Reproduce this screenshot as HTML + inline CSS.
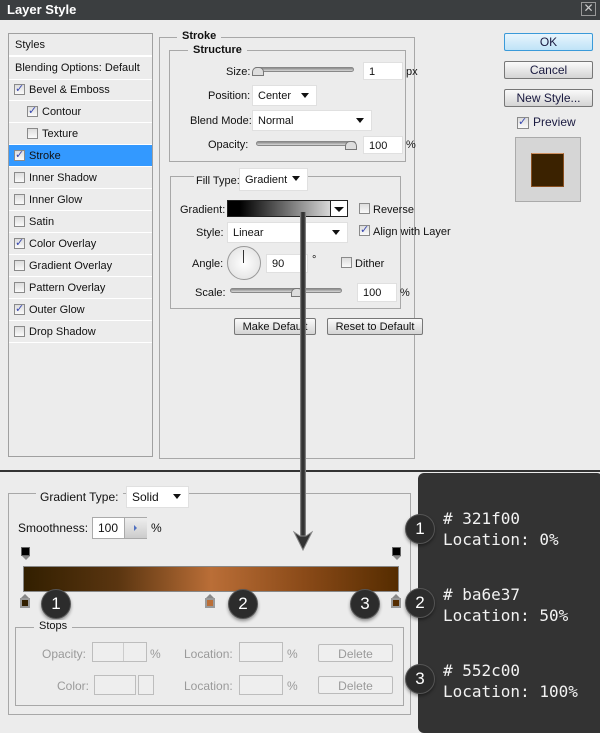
<!DOCTYPE html>
<html><head><meta charset="utf-8"><style>
*{margin:0;padding:0;box-sizing:border-box}
body{width:600px;height:731px;background:#ececec;font-family:"Liberation Sans","DejaVu Sans",sans-serif;font-size:11px;color:#111;position:relative;overflow:hidden}
.a{position:absolute}
.t{position:absolute;white-space:nowrap}
.title{left:0;top:0;width:600px;height:20px;background:#3b3e40;color:#fff;font-weight:bold;font-size:13px;padding:2px 0 0 7px}
.x{right:4px;top:2px;width:15px;height:14px;border:1px solid #999;color:#ccc;font-size:12px;line-height:11px;text-align:center}
.list{left:8px;top:33px;width:145px;height:424px;border:1px solid #a0a0a0;background:#ececec}
.row{position:absolute;left:0;width:143px;height:22px;border-bottom:1px solid #fff;padding:5px 0 0 20px}
.cb{position:absolute;width:11px;height:11px;border:1px solid #8a8a8a;background:linear-gradient(#ddd,#fafafa)}
.cb.on::after{content:"✓";position:absolute;left:0px;top:-3px;font-size:11px;color:#3a4ab0;font-weight:bold}
.sel{background:#3399ff}
.box{position:absolute;border:1px solid #a8a8a8}
.lg{position:absolute;background:#ececec;padding:0 5px;font-weight:bold}
.inp{position:absolute;background:#fff;border:1px solid #e0e0e0;height:18px;padding:3px 0 0 5px}
.dd::after{content:"";position:absolute;right:7px;top:7px;border:4px solid transparent;border-top:5px solid #111;border-bottom:0}
.sl{position:absolute;height:5px;border-radius:3px;background:linear-gradient(#8a8a8a,#d8d8d8);border:1px solid #888}
.th{position:absolute;width:12px;height:9px;background:#ddd;border:1px solid #777;border-radius:5px 5px 0 0}
.btn{position:absolute;height:17px;border:1px solid #777;border-radius:2px;background:linear-gradient(#fafafa,#d4d4d4);text-align:center;padding-top:2px;font-size:11px}
.big{font-size:12px;padding-top:1px;color:#1a1a40}
.dark{left:418px;top:473px;width:185px;height:260px;background:#333;border-radius:6px 6px 0 6px}
.mono{font-family:"DejaVu Sans Mono","Liberation Mono",monospace;font-size:16px;color:#f2f2f2;line-height:21px}
.circ{position:absolute;width:30px;height:30px;border-radius:50%;background:#2c2c2c;border:1px solid #555;color:#fff;font-size:17px;text-align:center;line-height:28px;box-shadow:0 2px 3px rgba(0,0,0,.4)}
.gray{color:#9a9a9a}
.ginp{position:absolute;border:1px solid #bdbdbd;background:#eee;height:20px}
.mk{position:absolute;width:10px;height:15px}
</style></head><body>
<div class="a title">Layer Style</div>
<div class="a x">✕</div>

<div class="a list">
 <div class="row" style="top:0;padding-left:6px;border-bottom:2px solid #fff;height:23px">Styles</div>
 <div class="row" style="top:23px;padding-left:6px;height:23px">Blending Options: Default</div>
 <div class="row" style="top:45px"><span class="cb on" style="left:5px;top:5px"></span>Bevel &amp; Emboss</div>
 <div class="row" style="top:67px;padding-left:33px"><span class="cb on" style="left:18px;top:5px"></span>Contour</div>
 <div class="row" style="top:89px;padding-left:33px"><span class="cb" style="left:18px;top:5px"></span>Texture</div>
 <div class="row sel" style="top:111px"><span class="cb on" style="left:5px;top:5px"></span>Stroke</div>
 <div class="row" style="top:133px"><span class="cb" style="left:5px;top:5px"></span>Inner Shadow</div>
 <div class="row" style="top:155px"><span class="cb" style="left:5px;top:5px"></span>Inner Glow</div>
 <div class="row" style="top:177px"><span class="cb" style="left:5px;top:5px"></span>Satin</div>
 <div class="row" style="top:199px"><span class="cb on" style="left:5px;top:5px"></span>Color Overlay</div>
 <div class="row" style="top:221px"><span class="cb" style="left:5px;top:5px"></span>Gradient Overlay</div>
 <div class="row" style="top:243px"><span class="cb" style="left:5px;top:5px"></span>Pattern Overlay</div>
 <div class="row" style="top:265px"><span class="cb on" style="left:5px;top:5px"></span>Outer Glow</div>
 <div class="row" style="top:287px"><span class="cb" style="left:5px;top:5px"></span>Drop Shadow</div>
</div>

<div class="box" style="left:159px;top:37px;width:256px;height:422px"></div>
<div class="lg" style="left:177px;top:30px">Stroke</div>
<div class="box" style="left:169px;top:50px;width:237px;height:112px"></div>
<div class="lg" style="left:188px;top:44px">Structure</div>
<div class="t" style="left:226px;top:66px">Size:</div>
<div class="sl" style="left:254px;top:67px;width:100px"></div><div class="th" style="left:252px;top:67px"></div>
<div class="inp" style="left:363px;top:62px;width:40px">1</div><div class="t" style="left:406px;top:66px">px</div>
<div class="t" style="left:208px;top:90px">Position:</div>
<div class="inp dd" style="left:252px;top:85px;width:65px;height:21px;padding-top:4px">Center</div>
<div class="t" style="left:190px;top:115px">Blend Mode:</div>
<div class="inp dd" style="left:252px;top:110px;width:120px;height:21px;padding-top:4px">Normal</div>
<div class="t" style="left:208px;top:139px">Opacity:</div>
<div class="sl" style="left:256px;top:141px;width:100px"></div><div class="th" style="left:345px;top:141px"></div>
<div class="inp" style="left:363px;top:136px;width:40px">100</div><div class="t" style="left:406px;top:139px">%</div>

<div class="box" style="left:170px;top:176px;width:231px;height:133px"></div>
<div class="t" style="left:194px;top:175px;background:#ececec;padding:0 2px">Fill Type:</div>
<div class="inp dd" style="left:239px;top:168px;width:69px;height:23px;padding-top:5px">Gradient</div>
<div class="t" style="left:180px;top:204px">Gradient:</div>
<div class="a" style="left:227px;top:200px;width:121px;height:17px;border:1px solid #222;background:linear-gradient(90deg,#000,#000 10%,#fff)"></div>
<div class="a" style="left:330px;top:200px;width:18px;height:17px;border:1px solid #222;background:#fff"></div>
<div class="a" style="left:334px;top:207px;border:5px solid transparent;border-top:5px solid #111;border-bottom:0"></div>
<div class="cb" style="left:359px;top:203px"></div><div class="t" style="left:373px;top:204px">Reverse</div>
<div class="t" style="left:196px;top:227px">Style:</div>
<div class="inp dd" style="left:227px;top:222px;width:121px;height:21px;padding-top:4px">Linear</div>
<div class="cb on" style="left:359px;top:225px"></div><div class="t" style="left:373px;top:226px">Align with Layer</div>
<div class="t" style="left:192px;top:258px">Angle:</div>
<div class="a" style="left:227px;top:246px;width:34px;height:34px;border-radius:50%;border:1px solid #999;background:radial-gradient(#fff,#ddd)"></div>
<div class="a" style="left:243px;top:250px;width:1px;height:13px;background:#333"></div>
<div class="inp" style="left:266px;top:254px;width:42px;height:19px">90</div><div class="t" style="left:312px;top:254px">°</div>
<div class="cb" style="left:341px;top:257px"></div><div class="t" style="left:355px;top:258px">Dither</div>
<div class="t" style="left:195px;top:287px">Scale:</div>
<div class="sl" style="left:230px;top:288px;width:112px"></div><div class="th" style="left:291px;top:288px"></div>
<div class="inp" style="left:357px;top:283px;width:40px;height:19px">100</div><div class="t" style="left:400px;top:287px">%</div>

<div class="btn" style="left:234px;top:318px;width:82px">Make Default</div>
<div class="btn" style="left:327px;top:318px;width:96px">Reset to Default</div>

<div class="btn big" style="left:504px;top:33px;width:89px;height:18px;border-color:#3a9ad9;background:linear-gradient(#e8f5fd,#bfe3f7)">OK</div>
<div class="btn big" style="left:504px;top:61px;width:89px;height:18px">Cancel</div>
<div class="btn big" style="left:504px;top:89px;width:89px;height:18px">New Style...</div>
<div class="cb on" style="left:517px;top:117px;width:12px;height:12px"></div><div class="t" style="left:533px;top:115px;font-size:12px;color:#1a1a40">Preview</div>
<div class="a" style="left:515px;top:137px;width:66px;height:65px;background:#d6d6d6;border:1px solid #aaa"></div>
<div class="a" style="left:531px;top:153px;width:33px;height:34px;background:#3b2200;border:1px solid #8a5020;border-top-color:#d09060"></div>

<div class="a" style="left:0;top:470px;width:600px;height:2px;background:#333"></div>

<div class="box" style="left:8px;top:493px;width:403px;height:222px"></div>
<div class="t" style="left:36px;top:490px;font-size:12px;background:#ececec;padding:0 4px">Gradient Type:</div>
<div class="inp dd" style="left:126px;top:486px;width:63px;height:22px;font-size:12px">Solid</div>
<div class="t" style="left:18px;top:521px;font-size:12px">Smoothness:</div>
<div class="inp" style="left:92px;top:517px;width:55px;height:22px;border-color:#aaa;font-size:12px">100</div>
<div class="a" style="left:124px;top:518px;width:23px;height:20px;background:linear-gradient(#eee,#ccc);border-left:1px solid #aaa"></div>
<div class="a" style="left:134px;top:525px;border:3px solid transparent;border-left:3px solid #5070c0;border-right:0"></div>
<div class="t" style="left:151px;top:521px;font-size:12px">%</div>

<div class="mk" style="left:21px;top:547px"><div style="width:9px;height:9px;background:#000;border:1px solid #666"></div><div style="margin-left:1px;border:4px solid transparent;border-top:4px solid #888;border-bottom:0;width:0"></div></div>
<div class="mk" style="left:392px;top:547px"><div style="width:9px;height:9px;background:#000;border:1px solid #666"></div><div style="margin-left:1px;border:4px solid transparent;border-top:4px solid #888;border-bottom:0;width:0"></div></div>
<div class="a" style="left:23px;top:566px;width:376px;height:26px;border:1px solid #888;background:linear-gradient(90deg,#321f00,#5a3510 25%,#ba6e37 50%,#8a4a18 75%,#552c00)"></div>
<div class="mk" style="left:20px;top:594px"><div style="margin-left:1px;border:4px solid transparent;border-bottom:4px solid #888;border-top:0;width:0"></div><div style="width:10px;height:10px;background:#321f00;border:2px solid #999"></div></div>
<div class="mk" style="left:205px;top:594px"><div style="margin-left:1px;border:4px solid transparent;border-bottom:4px solid #888;border-top:0;width:0"></div><div style="width:10px;height:10px;background:#ba6e37;border:2px solid #999"></div></div>
<div class="mk" style="left:391px;top:594px"><div style="margin-left:1px;border:4px solid transparent;border-bottom:4px solid #888;border-top:0;width:0"></div><div style="width:10px;height:10px;background:#552c00;border:2px solid #999"></div></div>

<div class="circ" style="left:41px;top:589px">1</div>
<div class="circ" style="left:228px;top:589px">2</div>
<div class="circ" style="left:350px;top:589px">3</div>

<div class="box" style="left:15px;top:627px;width:389px;height:79px"></div>
<div class="t" style="left:34px;top:620px;background:#ececec;padding:0 5px">Stops</div>
<div class="t gray" style="left:42px;top:647px;font-size:12px">Opacity:</div>
<div class="ginp" style="left:92px;top:642px;width:55px"></div><div class="a" style="left:123px;top:643px;width:1px;height:18px;background:#ccc"></div>
<div class="t gray" style="left:150px;top:647px;font-size:12px">%</div>
<div class="t gray" style="left:184px;top:647px;font-size:12px">Location:</div>
<div class="ginp" style="left:239px;top:642px;width:44px"></div><div class="t gray" style="left:287px;top:647px;font-size:12px">%</div>
<div class="btn gray" style="left:318px;top:644px;width:75px;height:18px;background:#efefef;border-color:#bbb;font-size:12px">Delete</div>
<div class="t gray" style="left:57px;top:679px;font-size:12px">Color:</div>
<div class="ginp" style="left:94px;top:675px;width:42px"></div><div class="ginp" style="left:138px;top:675px;width:16px"></div>
<div class="t gray" style="left:184px;top:679px;font-size:12px">Location:</div>
<div class="ginp" style="left:239px;top:675px;width:44px"></div><div class="t gray" style="left:287px;top:679px;font-size:12px">%</div>
<div class="btn gray" style="left:318px;top:676px;width:75px;height:18px;background:#efefef;border-color:#bbb;font-size:12px">Delete</div>

<div class="a dark"></div>
<div class="t mono" style="left:443px;top:508px">#&nbsp;321f00<br>Location:&nbsp;0%</div>
<div class="t mono" style="left:443px;top:584px">#&nbsp;ba6e37<br>Location:&nbsp;50%</div>
<div class="t mono" style="left:443px;top:660px">#&nbsp;552c00<br>Location:&nbsp;100%</div>
<div class="circ" style="left:405px;top:514px">1</div>
<div class="circ" style="left:405px;top:588px">2</div>
<div class="circ" style="left:405px;top:664px">3</div>

<div class="a" style="left:300px;top:212px;width:6px;height:330px;background:linear-gradient(90deg,#999,#333 30%,#333 70%,#999)"></div>
<svg class="a" style="left:293px;top:530px" width="20" height="22"><path d="M1 2 L10 20 L19 2 L13 6 L7 6 Z" fill="#333" stroke="#888"/></svg>
</body></html>
